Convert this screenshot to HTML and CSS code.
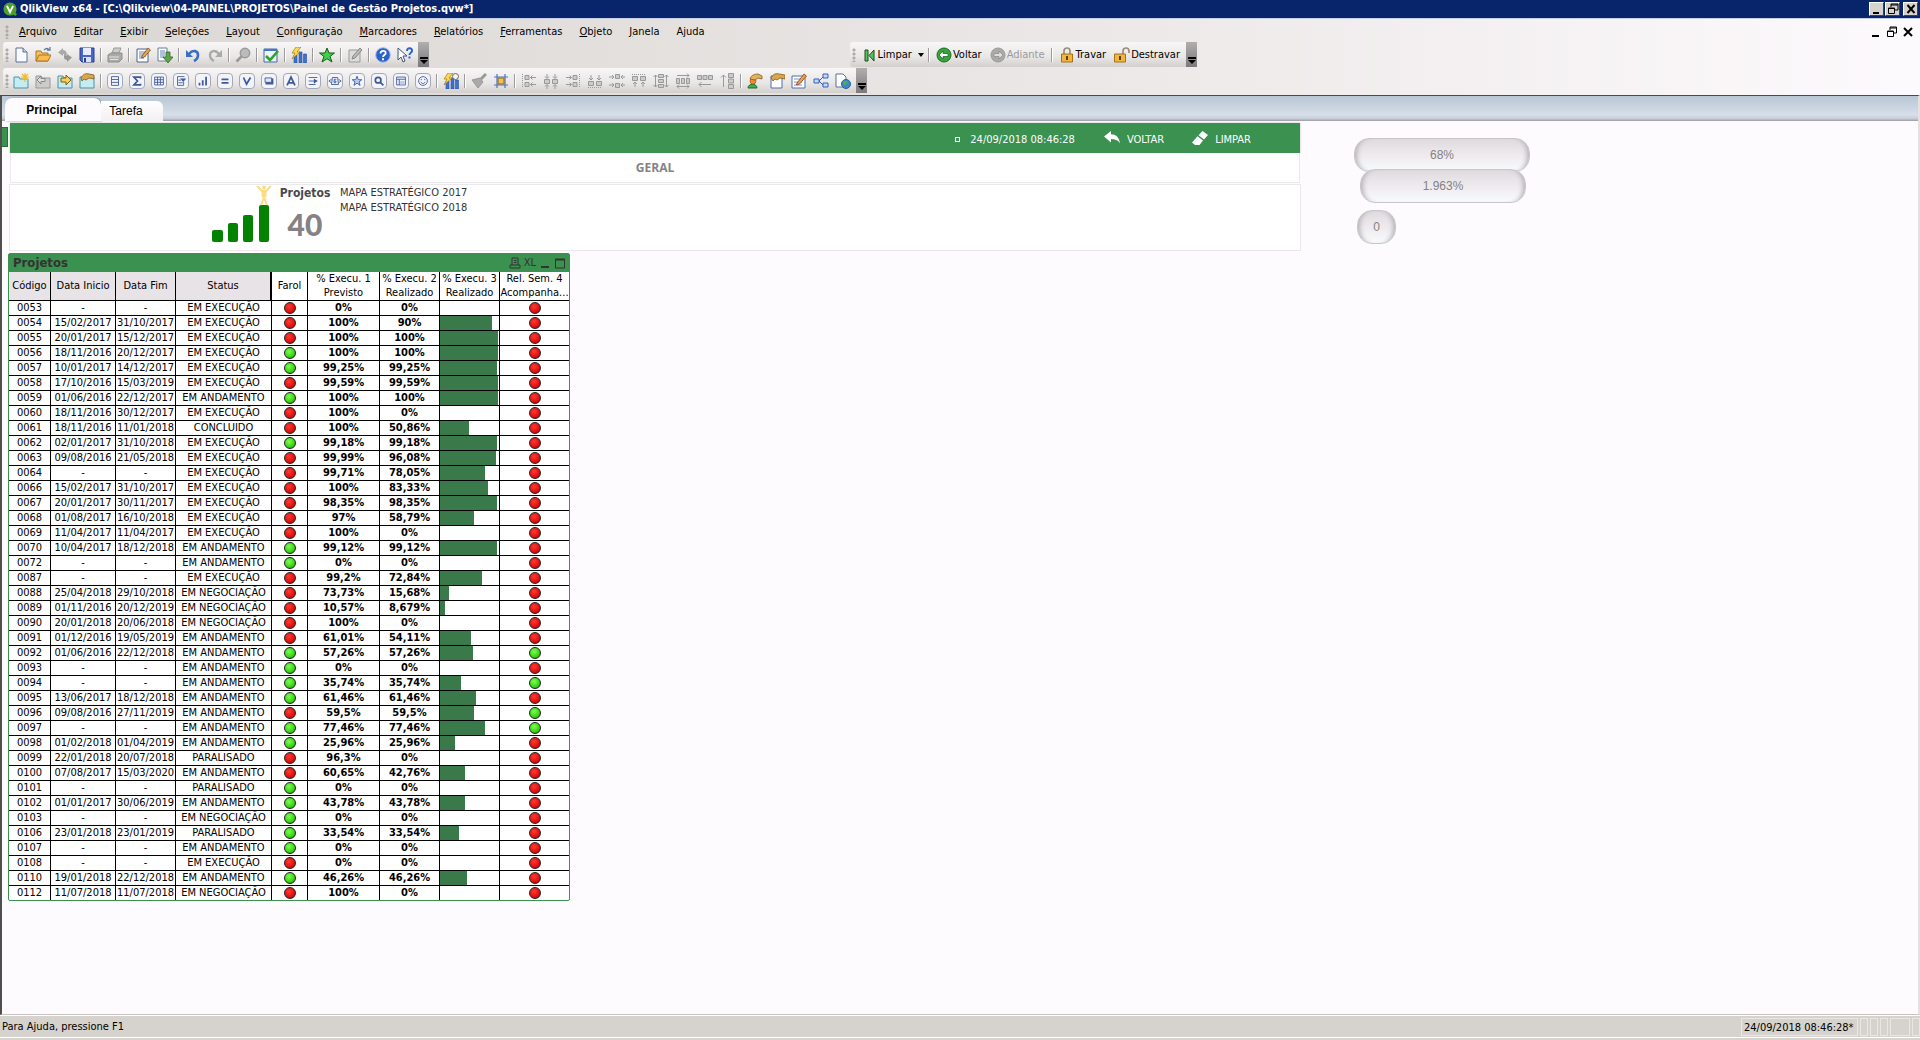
FILE: index.html
```html
<!DOCTYPE html>
<html lang="pt-BR">
<head>
<meta charset="utf-8">
<title>QlikView x64 - Painel de Gestão Projetos</title>
<link rel="stylesheet" href="styles.css">
</head>
<body>
<header class="titlebar">
  <svg class="app-icon" viewBox="0 0 16 16"><circle cx="8" cy="8" r="7.500" fill="#4fa02c"/><path d="M11 11l4 4" stroke="#4fa02c" stroke-width="3"/><path d="M4.500 4.500 8 11.500 11.500 4.500" fill="none" stroke="#fff" stroke-width="2.200"/></svg>
  <h1>QlikView x64 - [C:\Qlikview\04-PAINEL\PROJETOS\Painel de Gestão Projetos.qvw*]</h1>
  <div class="win-buttons">
    <button aria-label="Minimizar"><svg viewBox="0 0 12 12"><path d="M2 9h6v2H2z"/></svg></button>
    <button aria-label="Restaurar"><svg viewBox="0 0 12 12"><path d="M4 1h7v6H8M4 1v3M4 2h7" class="ln"/><path d="M1.500 5h6v5.500h-6zM1.500 5.500h6" class="ln"/></svg></button>
    <button aria-label="Fechar" class="close"><svg viewBox="0 0 12 12"><path d="M2.500 2l7 8M9.500 2l-7 8" class="x"/></svg></button>
  </div>
</header>

<div class="chrome">
  <div class="menu-row">
    <span class="grip"></span>
    <nav class="menu">
      <a href="#"><u>A</u>rquivo</a><a href="#"><u>E</u>ditar</a><a href="#"><u>E</u>xibir</a><a href="#"><u>S</u>eleções</a><a href="#"><u>L</u>ayout</a><a href="#"><u>C</u>onfiguração</a><a href="#"><u>M</u>arcadores</a><a href="#"><u>R</u>elatórios</a><a href="#"><u>F</u>erramentas</a><a href="#"><u>O</u>bjeto</a><a href="#"><u>J</u>anela</a><a href="#">A<u>j</u>uda</a>
    </nav>
    <div class="doc-buttons">
      <button aria-label="Minimizar documento"><svg viewBox="0 0 12 12"><path d="M2 9h7v2H2z"/></svg></button>
      <button aria-label="Restaurar documento"><svg viewBox="0 0 12 12"><path d="M4 1h6.500v6H8M4 1v3M4 2h6" class="ln"/><path d="M1.500 5h6v5.500h-6zM1.500 5.500h6" class="ln"/></svg></button>
      <button aria-label="Fechar documento"><svg viewBox="0 0 12 12"><path d="M2 2l8 8M10 2l-8 8" class="x"/></svg></button>
    </div>
  </div>

  <div class="toolbar-row">
    <div class="toolbar" role="toolbar" aria-label="Padrão">
      <span class="grip"></span>
      <button aria-label="Novo"><svg viewBox="0 0 16 16"><path d="M3 1h7l4 4v10H3z" fill="#f8fbff" stroke="#5c6f96"/><path d="M10 1v4h4" fill="#c9d6ee" stroke="#5c6f96"/></svg></button>
      <button aria-label="Abrir"><svg viewBox="0 0 16 16"><path d="M1 14V4h5l1 2h6v8z" fill="#f3c25a" stroke="#a8762a"/><path d="M1 14l3-6h12l-3 6z" fill="#ffb84a" stroke="#a8762a"/><path d="M9 3c2-2 4-2 5 0M12 3h3V0" fill="none" stroke="#5d7da0" stroke-width="1.300"/></svg></button>
      <button aria-label="Recarregar" disabled><svg viewBox="0 0 16 16"><path d="M6 1 1 5.500 6 9V7c2 0 3 1 3 3 2-4 0-7-3-7z" fill="#aaa"/><path d="M10 15l5-4.500L10 7v2C9 9 8 8 8 6c-2 4-1 7 2 7z" fill="#999"/></svg></button>
      <button aria-label="Salvar"><svg viewBox="0 0 16 16"><path d="M1 1h14v14H3l-2-2z" fill="#4a66c8" stroke="#2b3f91"/><path d="M4 1h8v7H4z" fill="#e6edfc"/><path d="M4 10h8v5H4z" fill="#dbe2f5"/><path d="M5 11h2v4H5z" fill="#2b3f91"/></svg></button>
      <i class="sep"></i>
      <button aria-label="Imprimir" disabled><svg viewBox="0 0 16 16"><path d="M5 6l2-5h7l-2 5z" fill="#ccc" stroke="#999"/><path d="M1 8l3-2h11v6l-3 3H1z" fill="#aaa" stroke="#8e8e8e"/><path d="M2 10h10M3 12.500h8" stroke="#e6e6e6"/></svg></button>
      <i class="sep"></i>
      <button aria-label="Editar script"><svg viewBox="0 0 16 16"><path d="M2 2h11v13H2z" fill="#fff" stroke="#4e6285"/><path d="M4 5h7M4 7h7M4 9h7M4 11h5" stroke="#6683b8"/><path d="M7 9 13 1l2.500 2L9.500 10l-3 1z" fill="#e9a646" stroke="#7b4a22" stroke-width=".8"/></svg></button>
      <button aria-label="Exportar"><svg viewBox="0 0 16 16"><path d="M1 1h9v13H1z" fill="#fff" stroke="#6d7e9b"/><path d="M3 4h5M3 6h5M3 8h5M3 10h4" stroke="#6683b8"/><path d="M9 5h4v5h3l-5 6-5-6h3z" fill="#5da44c" stroke="#2f6a27" stroke-width=".8"/></svg></button>
      <i class="sep"></i>
      <button aria-label="Desfazer"><svg viewBox="0 0 16 16"><path d="M4 7c4-5 9-3 9 1 0 3-2 5-4 6" fill="none" stroke="#3b6cc6" stroke-width="2.600"/><path d="M1 3v7h7z" fill="#3b6cc6"/></svg></button>
      <button aria-label="Refazer" disabled><svg viewBox="0 0 16 16"><path d="M12 7C8 2 3 4 3 8c0 3 2 5 4 6" fill="none" stroke="#aaa" stroke-width="2.400"/><path d="M15 3v7H8z" fill="#aaa"/></svg></button>
      <i class="sep"></i>
      <button aria-label="Pesquisar" disabled><svg viewBox="0 0 16 16"><path d="M1.500 14.500 7 9" stroke="#999" stroke-width="2.600"/><circle cx="10" cy="6" r="4.700" fill="#bbb" stroke="#9a9a9a" stroke-width="1.500"/></svg></button>
      <i class="sep"></i>
      <button aria-label="Seleções atuais"><svg viewBox="0 0 16 16"><path d="M1 2h13v13H1z" fill="#eef3fd" stroke="#4468a8"/><path d="M1 2h13v2H1z" fill="#4a76c6"/><path d="M3 9l4 4 8-9" fill="none" stroke="#2ea528" stroke-width="2.600"/></svg></button>
      <i class="sep"></i>
      <button aria-label="Gráfico rápido"><svg viewBox="0 0 16 16"><path d="M3 8h3v8H3zM8 5h3v11H8zM12.500 7h3v9h-3z" fill="#3d72cf" stroke="#2a4f9d" stroke-width=".6"/><path d="M5 0h5L6 5h3l-8 7 3-6H1z" fill="#ffd84c" stroke="#9c7a1f" stroke-width=".7"/></svg></button>
      <i class="sep"></i>
      <button aria-label="Adicionar marcador"><svg viewBox="0 0 16 16"><path d="M8 1l2 5h5.500L11 9.500l2 5.500-5-3.300L3 15l2-5.500L.5 6H6z" fill="#3fd04a" stroke="#145c19"/></svg></button>
      <i class="sep"></i>
      <button aria-label="Editar nota" disabled><svg viewBox="0 0 16 16"><path d="M2 3h11v12H2z" fill="#ddd" stroke="#999"/><path d="M5 12l1-3 7-8 2 2-7 8z" fill="#bbb" stroke="#888"/></svg></button>
      <i class="sep"></i>
      <button aria-label="Ajuda"><svg viewBox="0 0 16 16"><circle cx="8" cy="8" r="7.300" fill="#2b62c9" stroke="#a8bce6"/><path d="M5.500 6.500C5.500 3 10.700 3 10.700 6c0 2-2.700 2-2.700 4" fill="none" stroke="#fff" stroke-width="1.800"/><path d="M7 11.300h2v1.900H7z" fill="#fff"/></svg></button>
      <button aria-label="O que é isto"><svg viewBox="0 0 16 16"><path d="M1 1v12l3-3 2 5 2-1-2-5h4z" fill="#fff" stroke="#40547c"/><path d="M10 4c0-4 5.500-3.500 5 0-.3 2-2.500 1.500-2.500 4" fill="none" stroke="#2b62c9" stroke-width="1.900"/><path d="M11.500 9.500h2v2h-2z" fill="#2b62c9"/></svg></button>
      <button class="more" aria-label="Mais botões"><svg viewBox="0 0 8 8"><path d="M0 0h8v2H0zM0 3h8L4 7z"/></svg></button>
    </div>
    <div class="toolbar nav-bar" role="toolbar" aria-label="Navegação">
      <span class="grip"></span>
      <button class="txt"><svg viewBox="0 0 16 16"><path d="M4 3h3v11H4z" fill="#57c25c" stroke="#1d4d22"/><path d="M13 3v11L8 8.500z" fill="#57c25c" stroke="#1d4d22"/></svg>Limpar</button>
      <button class="drop" aria-label="Opções de limpar"><svg viewBox="0 0 8 8"><path d="M1 2h6L4 6z"/></svg></button>
      <i class="sep"></i>
      <button class="txt"><svg viewBox="0 0 16 16"><circle cx="8" cy="8" r="7" fill="#35a53c" stroke="#1c6a22"/><path d="M3 8l4-4v2.500h5v3H7V12z" fill="#fff" stroke="#175a1d" stroke-width=".7"/></svg>Voltar</button>
      <button class="txt" disabled><svg viewBox="0 0 16 16"><circle cx="8" cy="8" r="7" fill="#aaa" stroke="#999"/><path d="M13 8 9 4v2.500H4v3h5V12z" fill="#ddd" stroke="#888" stroke-width=".7"/></svg>Adiante</button>
      <i class="sep"></i>
      <button class="txt"><svg viewBox="0 0 16 16"><path d="M5 8V4c0-4 6-4 6 0v4" fill="none" stroke="#9a8f78" stroke-width="1.700"/><path d="M2.500 7h11v8h-11z" fill="#f2b63f" stroke="#a3701c"/><path d="M7 9h2v4H7z" fill="#5d4212"/></svg>Travar</button>
      <button class="txt"><svg viewBox="0 0 16 16"><path d="M9 8V4c0-4 6-4 6 0v2" fill="none" stroke="#9a8f78" stroke-width="1.700"/><path d="M.5 7h11v8H.5z" fill="#f2b63f" stroke="#a3701c"/><path d="M5 9h2v4H5z" fill="#5d4212"/></svg>Destravar</button>
      <button class="more" aria-label="Mais botões"><svg viewBox="0 0 8 8"><path d="M0 0h8v2H0zM0 3h8L4 7z"/></svg></button>
    </div>
  </div>

  <div class="toolbar-row">
    <div class="toolbar" role="toolbar" aria-label="Design">
      <span class="grip"></span>
      <button aria-label="Nova pasta"><svg viewBox="0 0 16 16"><path d="M1 4h5l1 2h8v9H1z" fill="#c4edf3" stroke="#4a93a6"/><path d="M12 0v9M8 4h8M9 1l6 6M15 1 9 7" stroke="#f2bd25" stroke-width="1.200"/></svg></button>
      <button aria-label="Promover pasta" disabled><svg viewBox="0 0 16 16"><path d="M1 3h5l1 2h8v10H1z" fill="#ccc" stroke="#999"/><path d="M2 7l4-4v2.500h4v3H6V11z" fill="#ddd" stroke="#888"/></svg></button>
      <button aria-label="Rebaixar pasta"><svg viewBox="0 0 16 16"><path d="M1 3h5l1 2h8v10H1z" fill="#c4edf3" stroke="#4a93a6"/><path d="M14 7l-5-5v3H4v4h5v3z" fill="#f9cf54" stroke="#7d5d1b"/></svg></button>
      <button aria-label="Propriedades da pasta"><svg viewBox="0 0 16 16"><path d="M1 4h14v11H1z" fill="#c4edf3" stroke="#4a93a6"/><path d="M2 5c2-4 5-5 8-4l5 1v4l-5-1-3 2-2-1-2 2z" fill="#dda54b" stroke="#7d5d1b" stroke-width=".8"/></svg></button>
      <i class="sep"></i>
      <button class="obj" aria-label="Lista"><svg viewBox="0 0 16 16"><path d="M4 3h8v10H4zM4 6.300h8M4 9.600h8" class="b"/></svg></button>
      <button class="obj" aria-label="Estatística"><svg viewBox="0 0 16 16"><path d="M12 5V3.500H4.500L8.500 8l-4 4.500H12V11" class="b2"/></svg></button>
      <button class="obj" aria-label="Tabela"><svg viewBox="0 0 16 16"><path d="M3 3.500h10v9H3zM3 6.500h10M3 9.500h10M6.300 3.500v9M9.600 3.500v9" class="b"/></svg></button>
      <button class="obj" aria-label="Seleção múltipla"><svg viewBox="0 0 16 16"><path d="M11 9v4H4V3h8M5 7h3M5 10h5" class="b"/><path d="M7 5h7l-3.500 4z" class="f"/></svg></button>
      <button class="obj" aria-label="Gráfico"><svg viewBox="0 0 16 16"><path d="M3 10h2v3H3zM6.700 7h2v6h-2zM10.500 3h2v10h-2z" class="f"/></svg></button>
      <button class="obj" aria-label="Entrada"><svg viewBox="0 0 16 16"><path d="M4 6h8M4 10h8" class="b2"/></svg></button>
      <button class="obj" aria-label="Seleções"><svg viewBox="0 0 16 16"><path d="M4 4l3.500 7.500L12 4" class="b2"/></svg></button>
      <button class="obj" aria-label="Botão"><svg viewBox="0 0 16 16"><path d="M4 5h9v7H4z" class="f"/><path d="M3.500 4.500h7.500v5H3.500z" fill="#dfe7f8" stroke="#3c5a9f"/></svg></button>
      <button class="obj" aria-label="Texto"><svg viewBox="0 0 16 16"><path d="M3.500 13 8 3.500 12.500 13M5 10h6" class="b2"/></svg></button>
      <button class="obj" aria-label="Linha"><svg viewBox="0 0 16 16"><path d="M3 4h10M3 8h10M3 12h8" class="b"/><path d="M9 5l4 3-4 3z" class="f"/></svg></button>
      <button class="obj" aria-label="Barra deslizante"><svg viewBox="0 0 16 16"><path d="M5 4h6l1 8H4zM4 6 1 8l3 2M12 6l3 2-3 2" class="b"/><path d="M9.500 6H7v4h2V8H7" class="b"/></svg></button>
      <button class="obj" aria-label="Marcador"><svg viewBox="0 0 16 16"><path d="M8 2.500l1.500 4h4L10.300 9l1.200 4L8 10.500 4.500 13l1.200-4L2.500 6.500h4z" fill="#b9ccf4" stroke="#3c5a9f"/></svg></button>
      <button class="obj" aria-label="Busca"><svg viewBox="0 0 16 16"><circle cx="7" cy="7" r="3.200" class="b2"/><path d="M9.500 9.500 13 13" class="b2"/></svg></button>
      <button class="obj" aria-label="Recipiente"><svg viewBox="0 0 16 16"><path d="M3 3.500h10v9H3zM3 6h10M6 6v6.500" class="b"/><path d="M7 8h5v4H7z" fill="#b9ccf4"/></svg></button>
      <button class="obj" aria-label="Personalizado"><svg viewBox="0 0 16 16"><circle cx="8" cy="8" r="5" class="b"/><path d="M5.500 9c1 2.500 4 2.500 5 0M6 5.500v1.500M10 5.500v1.500" class="b"/></svg></button>
      <i class="sep"></i>
      <button aria-label="Assistente de tempo"><svg viewBox="0 0 16 16"><path d="M3 8h3v8H3zM8 5h3v11H8zM12.500 7h3v9h-3z" fill="#3d72cf" stroke="#2a4f9d" stroke-width=".6"/><path d="M5 0h5L6 5h3l-8 7 3-6H1z" fill="#ffd84c" stroke="#9c7a1f" stroke-width=".7"/><circle cx="12.500" cy="3.500" r="3" fill="#f4f4f4" stroke="#666"/></svg></button>
      <i class="sep"></i>
      <button aria-label="Copiar formato" disabled><svg viewBox="0 0 16 16"><path d="M15 1 10 6" stroke="#999" stroke-width="3"/><path d="M1 7l8-2 3 4-5 6z" fill="#aaa" stroke="#999"/></svg></button>
      <button aria-label="Grade de design"><svg viewBox="0 0 16 16"><path d="M4 1v14M12 1v14M1 4h14M1 12h14" stroke="#4a76c6" stroke-width="1.200"/><path d="M5 5h6v6H5z" fill="#f5bf4a" stroke="#8a6522"/></svg></button>
      <i class="sep"></i>
      <button aria-label="Alinhar à esquerda" disabled><svg viewBox="0 0 16 16" class="g"><path d="M1.500 1v14" stroke-dasharray="1 1"/><path d="M4 2.500h4v4H4zM4 9.500h4v4H4z" class="gf"/><path d="M9.500 4.500H15M11.500 2.500l-2 2 2 2M9.500 11.500H15M11.500 9.500l-2 2 2 2"/></svg></button>
      <button aria-label="Centralizar horizontalmente" disabled><svg viewBox="0 0 16 16" class="g"><path d="M1.500 6.500h5v4h-5zM9.500 6.500h5v4h-5z" class="gf"/><path d="M4 1v4M2 3.500l2 2 2-2M12 1v4M10 3.500l2 2 2-2M4 16v-4M12 16v-4M2 13.500l2-2 2 2M10 13.500l2-2 2 2"/></svg></button>
      <button aria-label="Alinhar à direita" disabled><svg viewBox="0 0 16 16" class="g"><path d="M14.500 1v14" stroke-dasharray="1 1"/><path d="M8 2.500h4v4H8zM8 9.500h4v4H8z" class="gf"/><path d="M1 4.500h5.500M4.500 2.500l2 2-2 2M1 11.500h5.500M4.500 9.500l2 2-2 2"/></svg></button>
      <button aria-label="Alinhar abaixo" disabled><svg viewBox="0 0 16 16" class="g"><path d="M1 14.500h14" stroke-dasharray="1 1"/><path d="M1.500 8.500h5v4h-5zM9.500 8.500h5v4h-5z" class="gf"/><path d="M4 2v5M2 5l2 2 2-2M12 2v5M10 5l2 2 2-2"/></svg></button>
      <button aria-label="Centralizar verticalmente" disabled><svg viewBox="0 0 16 16" class="g"><path d="M6.500 1.500h4v4h-4zM6.500 10.500h4v4h-4z" class="gf"/><path d="M0 4h5M3 2l2 2-2 2M0 12h5M3 10l2 2-2 2M16 4h-4M16 12h-4M14 2l-2 2 2 2M14 10l-2 2 2 2"/></svg></button>
      <button aria-label="Alinhar acima" disabled><svg viewBox="0 0 16 16" class="g"><path d="M1 1.500h14" stroke-dasharray="1 1"/><path d="M1.500 3.500h5v4h-5zM9.500 3.500h5v4h-5z" class="gf"/><path d="M4 14V9M2 11l2-2 2 2M12 14V9M10 11l2-2 2 2"/></svg></button>
      <button aria-label="Espaçar verticalmente" disabled><svg viewBox="0 0 16 16" class="g"><path d="M5.500 1.500h5v3h-5zM5.500 6.500h5v3h-5zM5.500 11.500h5v3h-5z" class="gf"/><path d="M2.500 2v12M.5 4l2-2 2 2M.5 12l2 2 2-2M13.500 2v12M11.500 4l2-2 2 2M11.500 12l2 2 2-2"/></svg></button>
      <button aria-label="Espaçar horizontalmente" disabled><svg viewBox="0 0 16 16" class="g"><path d="M1.500 5.500h3v5h-3zM6.500 5.500h3v5h-3zM11.500 5.500h3v5h-3z" class="gf"/><path d="M2 2.500h12M12 .5l2 2-2 2M2 13.500h12M4 11.500l-2 2 2 2M12 11.500l2 2-2 2"/></svg></button>
      <button aria-label="Ajustar à esquerda" disabled><svg viewBox="0 0 16 16" class="g"><path d="M.5 2.500h4v4h-4zM6 2.500h4v4H6zM11.500 2.500h4v4h-4z" class="gf"/><path d="M2 11.500h12M4.500 9l-2.500 2.500L4.500 14"/></svg></button>
      <button aria-label="Ajustar acima" disabled><svg viewBox="0 0 16 16" class="g"><path d="M9.500 .5h5v4h-5zM9.500 6h5v4h-5zM9.500 11.500h5v4h-5z" class="gf"/><path d="M4.500 2v12M2 4.500 4.500 2 7 4.500"/></svg></button>
      <i class="sep"></i>
      <button aria-label="Usuário"><svg viewBox="0 0 16 16"><path d="M1 15c0-5 9-5 9 0z" fill="#3fae4a" stroke="#1e6a27"/><circle cx="6" cy="8" r="3" fill="#f08c2c" stroke="#a6540f" stroke-width=".7"/><path d="M3 6c1-4 5-5 8-5l4 2v3l-4-1-3 2z" fill="#e5b257" stroke="#7d5d1b" stroke-width=".8"/></svg></button>
      <button aria-label="Propriedades do documento"><svg viewBox="0 0 16 16"><path d="M2 3h11v12H2z" fill="#fff" stroke="#4e6fae"/><path d="M2 5c2-4 5-5 8-4l6 1v4l-5-1-3 2-2-1-2 2z" fill="#dda54b" stroke="#7d5d1b" stroke-width=".8"/></svg></button>
      <button aria-label="Editar módulo"><svg viewBox="0 0 16 16"><path d="M1 3h13v12H1z" fill="#fff" stroke="#4e6fae"/><path d="M3 6h8M3 9h8M3 12h8" stroke="#7a96cf"/><path d="M6 10 13 1l2.500 2L8.500 11l-3 1z" fill="#e9a646" stroke="#8d3b22" stroke-width=".8"/></svg></button>
      <button aria-label="Visualizador de tabelas"><svg viewBox="0 0 16 16"><path d="M1 6h5v4H1zM10 1h5v4h-5zM10 10h5v4h-5z" fill="#c5d7fa" stroke="#3460bd"/><path d="M6 8l4-4M6 8l4 4" stroke="#3460bd"/></svg></button>
      <button aria-label="Exportar para web"><svg viewBox="0 0 16 16"><path d="M1 1h7l3 3v10H1z" fill="#fff" stroke="#5c6f96"/><circle cx="11" cy="11" r="4.500" fill="#3c87c8" stroke="#28618f"/><path d="M8 9c2-2 3 0 5-1 0 3-2 2-3 5-1-2-2-2-2-4z" fill="#4fb04a"/></svg></button>
      <button class="more" aria-label="Mais botões"><svg viewBox="0 0 8 8"><path d="M0 0h8v2H0zM0 3h8L4 7z"/></svg></button>
    </div>
  </div>
</div>

<div class="document">
  <nav class="tabs">
    <a href="#" class="tab active">Principal</a>
    <a href="#" class="tab">Tarefa</a>
  </nav>
  <main class="sheet">
    <span class="side-handle"></span>
    <div class="left">
      <div class="banner">
        <span class="box"></span>
        <time>24/09/2018 08:46:28</time>
        <button class="back"><svg viewBox="0 0 16 14"><path d="M0 5.500 7 0v3.200c5 0 8 3 9 9-2-3-5-4.200-9-4.200v3.500z"/></svg>VOLTAR</button>
        <button class="clear"><svg viewBox="0 0 16 14"><path d="M10.500 0 16 4l-4 4.500L6.500 4.300zM5.500 5.300 11 9.500 7.500 14H3L0 11.500z"/></svg>LIMPAR</button>
      </div>
      <h2 class="general">GERAL</h2>
      <section class="kpi">
        <svg class="growth" viewBox="0 0 60 58"><g fill="#048204"><rect y="45" width="11" height="12" rx="2"/><rect x="16" y="38" width="10" height="19" rx="2"/><rect x="31" y="30" width="10" height="27" rx="2"/><rect x="47" y="20" width="10" height="37" rx="2"/></g><g fill="none" stroke="#fbdc83" stroke-width="2"><path d="M45 1l5 5h4l5-5M52 6v7M52 12l-3 8M52 12l3 8"/><path d="M52 6v6" stroke-width="5"/></g><circle cx="52" cy="2.500" r="2" fill="#fbdc83"/></svg>
        <div class="count"><h3>Projetos</h3><strong>40</strong></div>
        <ul><li>MAPA ESTRATÉGICO 2017</li><li>MAPA ESTRATÉGICO 2018</li></ul>
      </section>
      <section class="panel">
        <header>
          <h3>Projetos</h3>
          <button aria-label="Imprimir"><svg viewBox="0 0 12 12"><path d="M3 8V1h6v7M1 8h10v3H1zM5 3.500h2.500M5 5.500h2.500"/></svg></button>
          <button>XL</button>
          <button aria-label="Minimizar"><svg viewBox="0 0 12 12"><path d="M2 10h8" class="thick"/></svg></button>
          <button aria-label="Maximizar"><svg viewBox="0 0 12 12"><path d="M1.500 2v9h9V2"/><path d="M1 2.500h10" class="thick"/></svg></button>
        </header>
        <table>
          <colgroup><col class="c-code"><col class="c-start"><col class="c-end"><col class="c-status"><col class="c-light"><col class="c-plan"><col class="c-done"><col class="c-done"><col class="c-rel"></colgroup>
          <thead><tr><th>Código</th><th>Data Inicio</th><th>Data Fim</th><th>Status</th><th>Farol</th><th>% Execu. 1<br>Previsto</th><th>% Execu. 2<br>Realizado</th><th>% Execu. 3<br>Realizado</th><th>Rel. Sem. 4<br>Acompanha...</th></tr></thead>
          <tbody id="projects"></tbody>
        </table>
      </section>
    </div>
    <div class="right">
      <button class="pill wide">68%</button>
      <button class="pill medium">1.963%</button>
      <button class="pill small">0</button>
    </div>
  </main>
</div>

<footer class="statusbar">
  <span>Para Ajuda, pressione F1</span>
  <div class="panes"><span class="clock">24/09/2018 08:46:28*</span><i></i><i></i><i></i><i class="big"></i><i></i></div>
</footer>
<script src="projects.js"></script>
</body>
</html>
```

FILE: styles.css
```css
* { box-sizing: border-box; }

body {
  margin: 0;
  min-height: 100vh;
  display: flex;
  flex-direction: column;
  background: #d6d3ce;
  color: #000;
  font: 11px/14px "DejaVu Sans Condensed", "DejaVu Sans", sans-serif;
}

h1, h2, h3, ul { margin: 0; padding: 0; font-size: inherit; }
a { color: inherit; text-decoration: none; }
button {
  padding: 0;
  border: 0;
  background: none;
  color: inherit;
  font: inherit;
  display: flex;
  align-items: center;
  justify-content: center;
}

/* title bar */
.titlebar {
  display: flex;
  align-items: center;
  height: 18px;
  padding: 0 2px 0 3px;
  background: #08246b;
  color: #fff;
}
.app-icon { width: 14px; height: 14px; margin-right: 3px; }
.titlebar h1 { flex: 1; white-space: nowrap; font-size: 11px; }
.win-buttons { display: flex; gap: 1px; }
.win-buttons button {
  width: 15px;
  height: 14px;
  background: #d6d3ce;
  border: 1px solid;
  border-color: #fff #424142 #424142 #fff;
}
.win-buttons .close { margin-left: 2px; }
.win-buttons svg, .doc-buttons svg { width: 12px; height: 12px; }
.ln { fill: none; stroke: #000; }
.x { fill: none; stroke: #000; stroke-width: 2; }

/* menu and toolbars */
.chrome {
  padding-bottom: 1px;
  border-top: 1px solid #c6cfe6;
  background: linear-gradient(to right, #dad6d2, #e9e5e4 50%, #fdfafd);
}
.menu-row { display: flex; align-items: center; height: 23px; padding: 2px 6px 0 3px; }
.menu { flex: 1; display: flex; gap: 17px; padding-left: 9px; }
.doc-buttons { display: flex; gap: 4px; }
.doc-buttons svg { display: block; }
.grip {
  flex: none;
  width: 7px;
  height: 14px;
  background: radial-gradient(circle, #aaa 1px, transparent 2px) 0 0 / 8px 4px;
}
.toolbar-row { display: flex; justify-content: space-between; height: 26px; padding-left: 3px; }
.toolbar {
  display: flex;
  align-items: center;
  height: 25px;
  border-radius: 3px;
  background: linear-gradient(#f9f6f7, #e9e6e6 60%, #d3cfcc);
}
.toolbar > button { width: 22px; height: 25px; }
.toolbar > button svg { width: 16px; height: 16px; }
.toolbar .sep { width: 2px; height: 14px; margin: 0 2px; background: #9c9a9c; border-right: 1px solid #fff; }
.toolbar > .more {
  width: 11px;
  margin-left: 2px;
  padding-bottom: 2px;
  align-items: flex-end;
  background: linear-gradient(#b0aeae, #7b797b);
}
.toolbar > .more svg { width: 8px; height: 8px; }
.nav-bar { margin-right: 723px; }
.toolbar > .txt { width: auto; gap: 1px; padding: 0 4px; }
.toolbar > .txt:disabled { color: #9a9a9a; }
.toolbar > .drop { width: 10px; }
.toolbar > .drop svg { width: 8px; height: 8px; }
.toolbar > .obj {
  width: 16px;
  height: 16px;
  margin: 0 3px;
  border: 1px solid #a3a8b8;
  border-radius: 4px;
  background: #f4f4f8;
}
.toolbar > .obj svg { width: 14px; height: 14px; flex: none; }
.b { fill: none; stroke: #3c5a9f; stroke-width: 1; }
.b2 { fill: none; stroke: #3c5a9f; stroke-width: 2; }
.f { fill: #3c5a9f; }
.g { fill: none; stroke: #999; }
.gf { fill: #ccc; }

/* document */
.document {
  flex: 1;
  display: flex;
  flex-direction: column;
  border-top: 1px solid #4a4a4a;
  border-left: 2px solid #4f4f4f;
  border-right: 2px solid #e4e2e0;
  border-bottom: 1px solid #c8c5c2;
  background: #fefbff;
}
.tabs {
  display: flex;
  align-items: flex-end;
  height: 25px;
  padding-left: 3px;
  background: linear-gradient(#b9c6d4, #d6dfea 75%, #c9ced6 90%, #9a9ca5);
}
.tab {
  display: flex;
  align-items: center;
  justify-content: center;
  width: 62px;
  height: 20px;
  padding-right: 12px;
  border-radius: 0 6px 0 0;
  background: linear-gradient(#fff, #f3eff2);
  font: 12px/14px "Liberation Sans", sans-serif;
}
.tab.active {
  width: 96px;
  height: 23px;
  padding: 0 3px 0 0;
  border-radius: 7px 7px 0 0;
  background: #fefbff;
  box-shadow: 1px 0 2px #8a8a8a;
  font-weight: bold;
}
.sheet {
  position: relative;
  display: grid;
  grid-template-columns: minmax(0, 1299fr) minmax(0, 617fr);
  padding-top: 2px;
}
.side-handle {
  position: absolute;
  left: 0;
  top: 6px;
  width: 6px;
  height: 20px;
  background: #3a9150;
  border: 1px solid #2c6b3b;
  border-left: 0;
}
.left { padding-left: 6px; }
.banner {
  display: flex;
  align-items: center;
  justify-content: flex-end;
  height: 30px;
  margin: 0 1px 0 2px;
  padding: 3px 49px 0 0;
  background: #3a9150;
  box-shadow: 0 0 2px #bbb;
  color: #fff;
}
.banner .box { width: 5px; height: 5px; border: 1px solid #fff; margin-right: 10px; }
.banner button { gap: 7px; }
.banner button svg { width: 16px; height: 14px; margin-bottom: 4px; fill: #fff; }
.banner .back { margin-left: 29px; }
.banner .clear { margin-left: 28px; }
.general {
  height: 30px;
  margin: 0 1px 0 2px;
  border: 1px solid #ece9ec;
  border-top: 0;
  background: #fff;
  color: #848284;
  font: bold 12px/30px "Open Sans", sans-serif;
  text-align: center;
}
.kpi {
  display: flex;
  height: 67px;
  margin: 1px 0 2px 1px;
  padding-left: 202px;
  border: 1px solid #ece9ec;
  background: #fff;
}
.growth { width: 60px; height: 58px; }
.count { width: 54px; margin-left: 6px; text-align: center; color: #4a4a4a; }
.count h3 { font-size: 12px; line-height: 16px; }
.count strong { display: block; color: #848284; font: 900 30px/46px "Lato", sans-serif; }
.kpi ul { list-style: none; margin-left: 8px; color: #333; line-height: 15px; }

/* project table */
.panel { width: 562px; border: 1px solid #3a9150; border-radius: 2px; background: #fff; }
.panel header {
  display: flex;
  align-items: center;
  gap: 3px;
  height: 18px;
  padding: 0 3px 0 4px;
  background: #3a9150;
  color: #333;
}
.panel header h3 { flex: 1; font-size: 13px; }
.panel header svg { width: 12px; height: 12px; fill: none; stroke: #333; }
.panel header .thick { stroke-width: 2; }
table { width: 100%; table-layout: fixed; border-spacing: 0; }
.c-code { width: 42px; }
.c-start { width: 65px; }
.c-end, .c-done { width: 60px; }
.c-status { width: 96px; }
.c-light { width: 36px; }
.c-plan { width: 72px; }
.c-rel { width: 69px; }
th, td {
  padding: 0;
  border-right: 1px solid #000;
  border-bottom: 1px solid #000;
  text-align: center;
  white-space: nowrap;
}
th { height: 29px; font-weight: normal; }
th:nth-child(-n+4) { background: #e7e3e7; }
th:nth-child(4) { border-right-width: 2px; }
th:last-child, td:last-child { border-right: 0; }
td { height: 15px; line-height: 14px; }
tr:last-child td { height: 14px; border-bottom: 0; }
td:nth-child(6), td:nth-child(7) { font-weight: bold; }
.bar { height: 14px; background: #39794a; }
.light { width: 12px; height: 12px; margin: 0 auto; border: 1px solid #222; border-radius: 50%; }
.red { background: radial-gradient(circle at 40% 35%, #ff3a30, #e01010 60%, #8a0808); }
.green { background: radial-gradient(circle at 40% 35%, #7cff50, #39d414 60%, #1b7a08); }

/* pills */
.right { padding: 15px 0 0 53px; }
.pill {
  height: 34px;
  border: 1px solid #c9c6ca;
  border-radius: 15px;
  background: linear-gradient(#dedade, #eeeaee 50%, #f8fbfd);
  box-shadow: inset 6px 0 5px -4px #b5b2b7, inset -6px 0 5px -4px #b5b2b7;
  color: #848284;
  font: 12px/14px "Liberation Sans", sans-serif;
}
.wide { width: 176px; }
.medium { width: 166px; margin: -3px 0 7px 6px; }
.small { width: 39px; margin-left: 3px; }

/* status bar */
.statusbar {
  display: flex;
  align-items: center;
  justify-content: space-between;
  height: 23px;
  margin-bottom: 2px;
  padding-left: 2px;
  border: solid #fff;
  border-width: 1px 0;
}
.panes { display: flex; gap: 2px; }
.panes > * { width: 8px; height: 18px; border: 1px solid #e9e7e3; }
.panes .clock { width: 117px; padding-left: 2px; line-height: 17px; }
.panes .big { width: 20px; }
```

FILE: projects.js
```js
// code | start | end | status | light | planned | done | report light
const statuses = { X: 'EM EXECUÇÃO', A: 'EM ANDAMENTO', N: 'EM NEGOCIAÇÃO', C: 'CONCLUIDO', P: 'PARALISADO' };
const data = `
0053|-|-|X|r|0|0|r
0054|15/02/2017|31/10/2017|X|r|100|90|r
0055|20/01/2017|15/12/2017|X|r|100|100|r
0056|18/11/2016|20/12/2017|X|g|100|100|r
0057|10/01/2017|14/12/2017|X|g|99,25|99,25|r
0058|17/10/2016|15/03/2019|X|r|99,59|99,59|r
0059|01/06/2016|22/12/2017|A|g|100|100|r
0060|18/11/2016|30/12/2017|X|r|100|0|r
0061|18/11/2016|11/01/2018|C|r|100|50,86|r
0062|02/01/2017|31/10/2018|X|g|99,18|99,18|r
0063|09/08/2016|21/05/2018|X|r|99,99|96,08|r
0064|-|-|X|r|99,71|78,05|r
0066|15/02/2017|31/10/2017|X|r|100|83,33|r
0067|20/01/2017|30/11/2017|X|r|98,35|98,35|r
0068|01/08/2017|16/10/2018|X|r|97|58,79|r
0069|11/04/2017|11/04/2017|X|r|100|0|r
0070|10/04/2017|18/12/2018|A|g|99,12|99,12|r
0072|-|-|A|g|0|0|r
0087|-|-|X|r|99,2|72,84|r
0088|25/04/2018|29/10/2018|N|r|73,73|15,68|r
0089|01/11/2016|20/12/2019|N|r|10,57|8,679|r
0090|20/01/2018|20/06/2018|N|r|100|0|r
0091|01/12/2016|19/05/2019|A|r|61,01|54,11|r
0092|01/06/2016|22/12/2018|A|g|57,26|57,26|g
0093|-|-|A|g|0|0|r
0094|-|-|A|g|35,74|35,74|g
0095|13/06/2017|18/12/2018|A|g|61,46|61,46|r
0096|09/08/2016|27/11/2019|A|r|59,5|59,5|g
0097|-|-|A|g|77,46|77,46|g
0098|01/02/2018|01/04/2019|A|g|25,96|25,96|r
0099|22/01/2018|20/07/2018|P|r|96,3|0|r
0100|07/08/2017|15/03/2020|A|r|60,65|42,76|r
0101|-|-|P|g|0|0|r
0102|01/01/2017|30/06/2019|A|g|43,78|43,78|r
0103|-|-|N|g|0|0|r
0106|23/01/2018|23/01/2019|P|g|33,54|33,54|r
0107|-|-|A|g|0|0|r
0108|-|-|X|r|0|0|r
0110|19/01/2018|22/12/2018|A|g|46,26|46,26|r
0112|11/07/2018|11/07/2018|N|r|100|0|r`;

const light = c => `<div class="light ${c === 'r' ? 'red' : 'green'}"></div>`;

document.getElementById('projects').innerHTML = data.trim().split('\n').map(line => {
  const [code, start, end, status, state, plan, done, report] = line.split('|');
  const width = parseFloat(done.replace(',', '.')) * 0.98;
  return `<tr><td>${code}</td><td>${start}</td><td>${end}</td><td>${statuses[status]}</td>
    <td>${light(state)}</td><td>${plan}%</td><td>${done}%</td>
    <td><div class="bar" style="width:${width.toFixed(1)}%"></div></td><td>${light(report)}</td></tr>`;
}).join('');
```
